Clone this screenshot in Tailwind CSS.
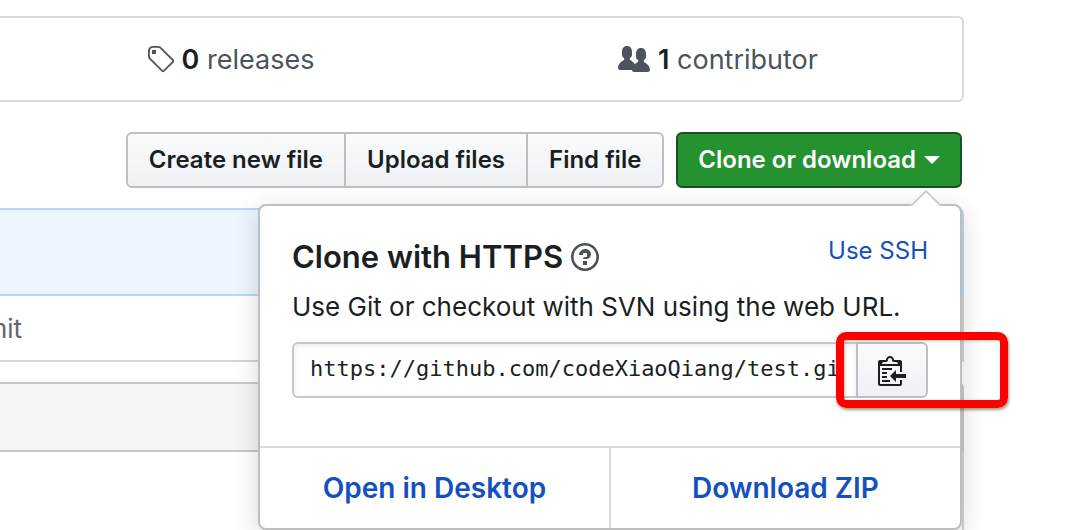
<!DOCTYPE html>
<html lang="en">
<head>
  <meta charset="UTF-8">
  <meta name="viewport" content="width=device-width, initial-scale=1.0">
  <title>codeXiaoQiang/test</title>
  <script src="https://cdn.jsdelivr.net/npm/@tailwindcss/browser@4"></script>
</head>
<body class="bg-white font-['Inter',sans-serif] text-[#1b1f23] overflow-hidden">
  <main class="-ml-4 mr-[116px] pt-4">

    <!-- Repository numbers -->
    <ul class="flex h-[86px] pt-0.5 border-2 border-[#d9dadc] rounded-md text-[27px] text-[#4c535d]">
      <li class="flex-1 flex items-center justify-center gap-2">
        <svg class="w-7 h-8" viewBox="0 0 14 16" fill="currentColor"><path d="M7.73 1.73C7.26 1.26 6.62 1 5.96 1H3.5C2.13 1 1 2.13 1 3.5v2.47c0 .66.27 1.3.73 1.77l6.06 6.06c.39.39 1.02.39 1.41 0l4.59-4.59a.996.996 0 0 0 0-1.41L7.73 1.73zM2.38 7.09c-.31-.3-.47-.7-.47-1.13V3.5c0-.88.72-1.59 1.59-1.59h2.47c.42 0 .83.16 1.13.47l6.14 6.13-4.73 4.73-6.13-6.15zM3.01 3h2v2H3V3h.01z"/></svg>
        <span><b class="font-semibold text-[#1b1f23]">0</b> releases</span>
      </li>
      <li class="flex-1 flex items-center justify-center gap-2">
        <svg class="w-8 h-8" viewBox="0 0 16 16" fill="currentColor"><path d="M16 12.999c0 .439-.45 1-1 1H7.995c-.539 0-.994-.447-.995-.999H1c-.54 0-1-.561-1-1 0-2.634 3-4 3-4s.229-.409 0-1c-.841-.621-1.058-.59-1-3 .058-2.419 1.367-3 2.5-3s2.442.58 2.5 3c.058 2.41-.159 2.379-1 3-.229.59 0 1 0 1s1.549.711 2.42 2.088C9.196 9.369 10 8.999 10 8.999s.229-.409 0-1c-.841-.62-1.058-.59-1-3 .058-2.419 1.367-3 2.5-3s2.437.581 2.495 3c.059 2.41-.158 2.38-1 3-.229.59 0 1 0 1s3.005 1.366 3.005 4"/></svg>
        <span><b class="font-semibold text-[#1b1f23]">1</b> contributor</span>
      </li>
    </ul>

    <!-- File actions -->
    <div class="flex justify-end gap-3 mt-[30px] mr-0.5 h-14 text-2xl font-semibold whitespace-nowrap">
      <div class="flex border-2 border-[#bcc0c4] rounded-md divide-x-2 divide-[#bcc0c4] bg-linear-to-b from-[#fafbfc] to-[#eef1f5]">
        <button class="px-[21px]">Create new file</button>
        <button class="px-[21px]">Upload files</button>
        <button class="px-[21px]">Find file</button>
      </div>

      <div class="relative">
        <button class="flex items-center gap-2 h-full px-5 border-2 border-[#1c4f29] rounded-md bg-[#23922f] text-white">
          Clone or download
          <svg class="w-4 h-2" viewBox="0 0 16 8" fill="currentColor"><path d="M0 0h16L8 8z"/></svg>
        </button>

        <!-- Clone popover -->
        <section class="absolute z-10 top-[72px] right-0 w-[704px] border-2 border-[#bdbebf] rounded-lg bg-white font-normal shadow-[0_6px_24px_rgba(27,31,35,0.18)]">
          <svg class="absolute right-[18px] -top-4 w-8 h-4" viewBox="0 0 32 16"><path d="M1 16 16 1l15 15" fill="#fff" stroke="#cfd0d1" stroke-width="2"/></svg>
          <div class="h-[240px] px-8 pt-[29px]">
            <div class="flex justify-between">
              <h2 class="flex items-center gap-2 h-11 text-[31px] font-semibold">
                Clone with HTTPS
                <a href="#" aria-label="Which remote URL should I use?" class="text-[#4c5157]"><svg class="w-7 h-8" viewBox="0 0 14 16" fill="currentColor"><path d="M6 10h2v2H6v-2zm4-3.5C10 8.64 8 9 8 9H6c0-.55.45-1 1-1h.5c.28 0 .5-.22.5-.5v-1c0-.28-.22-.5-.5-.5h-1c-.28 0-.5.22-.5.5V7H4c0-1.5 1.5-3 3-3s3 1 3 2.5zM7 2.3c3.14 0 5.7 2.56 5.7 5.7s-2.56 5.7-5.7 5.7A5.71 5.71 0 0 1 1.3 8c0-3.14 2.56-5.7 5.7-5.7zM7 1C3.14 1 0 4.14 0 8s3.14 7 7 7 7-3.14 7-7-3.14-7-7-7z"/></svg></a>
              </h2>
              <button class="h-8 text-2xl leading-8 text-[#1550c0]">Use SSH</button>
            </div>
            <label for="clone-url" class="block mt-2 text-[26px] leading-10">Use Git or checkout with SVN using the web URL.</label>
            <div class="flex h-14 mt-[15px]">
              <input id="clone-url" type="text" readonly value="https://github.com/codeXiaoQiang/test.git" class="flex-1 min-w-0 px-4 pb-0.5 border-2 border-r-0 border-[#c6c8ca] rounded-l-md bg-white font-['DejaVu_Sans_Mono',monospace] text-[22px] text-[#1b1f23] shadow-[inset_0_2px_4px_rgba(27,31,35,0.08)] outline-none">
              <button aria-label="Copy to clipboard" class="flex items-center justify-center w-[72px] border-2 border-[#bcc0c4] rounded-r-md bg-linear-to-b from-[#fafbfc] to-[#eef1f5] text-[#1b1f23]">
                <svg class="w-7 h-8" viewBox="0 0 14 16" fill="currentColor"><path d="M2 13h4v1H2v-1zm5-6H2v1h5V7zm2 3V8l-3 3 3 3v-2h5v-2H9zM4.5 9H2v1h2.5V9zM2 12h2.5v-1H2v1zm9 1h1v2c-.02.28-.11.52-.3.7-.19.18-.42.28-.7.3H1c-.55 0-1-.45-1-1V4c0-.55.45-1 1-1h3c0-1.11.89-2 2-2 1.11 0 2 .89 2 2h3c.55 0 1 .45 1 1v5h-1V6H1v9h10v-2zM2 5h8c0-.55-.45-1-1-1H8c-.55 0-1-.45-1-1s-.45-1-1-1-1 .45-1 1-.45 1-1 1H3c-.55 0-1 .45-1 1z"/></svg>
              </button>
            </div>
          </div>
          <div class="flex h-[82px] border-t-2 border-[#d9dadc] divide-x-2 divide-[#d9dadc] text-[28px] font-semibold text-[#1550c0]">
            <a href="#" class="flex-1 flex items-center justify-center pt-0.5">Open in Desktop</a>
            <a href="#" class="flex-1 flex items-center justify-center pt-0.5">Download ZIP</a>
          </div>

          <!-- Marker round the copy button -->
          <div class="absolute top-[126px] -right-12 w-[172px] h-[76px] border-8 border-[#fe0000] rounded-[10px] shadow-[1px_2px_3px_rgba(60,60,0,0.5),inset_1px_1px_3px_rgba(60,60,0,0.3)]"></div>
        </section>
      </div>
    </div>

    <!-- Latest commit and file list -->
    <div class="mt-5 h-[88px] border-2 border-[#b9d7f8] rounded-t-md bg-[#edf6ff]"></div>
    <div class="flex items-center h-[66px] border-r-2 border-b-2 border-[#d3d5d7] text-[26px] text-[#5f666d]">
      <p class="flex justify-end w-[38px] whitespace-nowrap">Initial commit</p>
    </div>
    <div class="mt-5 h-[70px] border-2 border-[#c6c9cc] rounded-t-md bg-[#f3f5f8]"></div>
    <div class="h-20 border-r-2 border-[#d3d5d7]"></div>
  </main>
</body>
</html>
